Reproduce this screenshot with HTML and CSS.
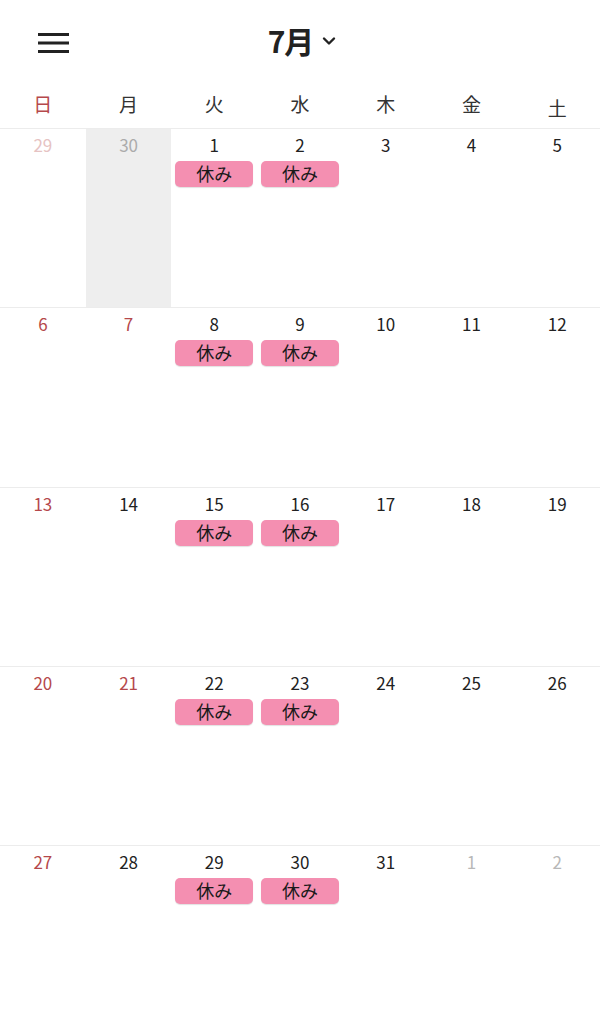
FILE: index.html
```html
<!DOCTYPE html>
<html lang="ja">
<head>
<meta charset="utf-8">
<link rel="stylesheet" href="styles.css">
</head>
<body>
<header class="topbar">
  <button class="menu" aria-label="menu">
    <svg width="32" height="22" viewBox="0 0 32 22"><rect x="0" y="1" width="31" height="3" fill="#222"/><rect x="0" y="9.5" width="31" height="3" fill="#222"/><rect x="0" y="18" width="31" height="3" fill="#222"/></svg>
  </button>
  <div class="title">7月<svg class="chev" width="14" height="10" viewBox="0 0 14 10"><path d="M2 2.5 L7 7.5 L12 2.5" fill="none" stroke="#222" stroke-width="2.4" stroke-linecap="round" stroke-linejoin="round"/></svg></div>
</header>
<div class="weekdays">
  <div class="wd sun">日</div><div class="wd">月</div><div class="wd">火</div><div class="wd">水</div><div class="wd">木</div><div class="wd">金</div><div class="wd sat">土</div>
</div>
<div class="month">
  <div class="week">
    <div class="cell"><span class="num prev-sun">29</span></div>
    <div class="cell gray"><span class="num prev">30</span></div>
    <div class="cell"><span class="num">1</span><span class="badge">休み</span></div>
    <div class="cell"><span class="num">2</span><span class="badge">休み</span></div>
    <div class="cell"><span class="num">3</span></div>
    <div class="cell"><span class="num">4</span></div>
    <div class="cell"><span class="num">5</span></div>
  </div>
  <div class="week">
    <div class="cell"><span class="num red">6</span></div>
    <div class="cell"><span class="num red">7</span></div>
    <div class="cell"><span class="num">8</span><span class="badge">休み</span></div>
    <div class="cell"><span class="num">9</span><span class="badge">休み</span></div>
    <div class="cell"><span class="num">10</span></div>
    <div class="cell"><span class="num">11</span></div>
    <div class="cell"><span class="num">12</span></div>
  </div>
  <div class="week">
    <div class="cell"><span class="num red">13</span></div>
    <div class="cell"><span class="num">14</span></div>
    <div class="cell"><span class="num">15</span><span class="badge">休み</span></div>
    <div class="cell"><span class="num">16</span><span class="badge">休み</span></div>
    <div class="cell"><span class="num">17</span></div>
    <div class="cell"><span class="num">18</span></div>
    <div class="cell"><span class="num">19</span></div>
  </div>
  <div class="week">
    <div class="cell"><span class="num red">20</span></div>
    <div class="cell"><span class="num red">21</span></div>
    <div class="cell"><span class="num">22</span><span class="badge">休み</span></div>
    <div class="cell"><span class="num">23</span><span class="badge">休み</span></div>
    <div class="cell"><span class="num">24</span></div>
    <div class="cell"><span class="num">25</span></div>
    <div class="cell"><span class="num">26</span></div>
  </div>
  <div class="week">
    <div class="cell"><span class="num red">27</span></div>
    <div class="cell"><span class="num">28</span></div>
    <div class="cell"><span class="num">29</span><span class="badge">休み</span></div>
    <div class="cell"><span class="num">30</span><span class="badge">休み</span></div>
    <div class="cell"><span class="num">31</span></div>
    <div class="cell"><span class="num next">1</span></div>
    <div class="cell"><span class="num next">2</span></div>
  </div>
</div>
</body>
</html>
```
FILE: styles.css
```css
* { box-sizing: border-box; }
html, body { margin: 0; padding: 0; background: #fff; }
body {
  font-family: "Noto Sans CJK JP", "Noto Sans", sans-serif;
  color: #222;
  width: 600px;
  height: 1022px;
  overflow: hidden;
}
.topbar {
  height: 85px;
  display: flex;
  align-items: center;
  justify-content: center;
  position: relative;
}
.menu {
  position: absolute;
  left: 38px;
  top: 32px;
  border: 0;
  background: none;
  padding: 0;
  width: 32px;
  height: 22px;
  display: block;
}
.menu svg { display: block; }
.title {
  font-size: 30px;
  font-weight: 700;
  line-height: 40px;
  display: flex;
  align-items: center;
  gap: 9px;
  margin-left: 4px;
  margin-top: -6px;
  letter-spacing: -1px;
}
.chev { margin-top: 2px; }
.weekdays {
  display: grid;
  grid-template-columns: repeat(7, 1fr);
  height: 44px;
  border-bottom: 1px solid #ececec;
}
.wd {
  text-align: center;
  font-size: 19px;
  line-height: 38px;
  color: #333;
}
.wd.sun { color: #b5484b; }
.wd.sat { padding-top: 4px; }
.month { display: flex; flex-direction: column; }
.week {
  display: grid;
  grid-template-columns: repeat(7, 1fr);
  height: 179.25px;
  border-bottom: 1px solid #ececec;
}
.cell {
  display: flex;
  flex-direction: column;
  align-items: stretch;
  padding: 4px 3px 0;
}
.cell.gray { background: #eeeeee; }
.num {
  text-align: center;
  font-size: 17px;
  line-height: 24px;
  color: #222;
}
.num.red { color: #b5484b; }
.num.prev-sun { color: #e6c3c3; }
.num.prev { color: #ababab; }
.num.next { color: #b8b8b8; }
.badge {
  margin: 4px 1px 0;
  height: 26px;
  background: #f48fb1;
  border-radius: 5px;
  box-shadow: 0 1px 1px rgba(0,0,0,0.12);
  text-align: center;
  font-size: 18px;
  line-height: 25px;
  color: #1a1a1a;
}
```
